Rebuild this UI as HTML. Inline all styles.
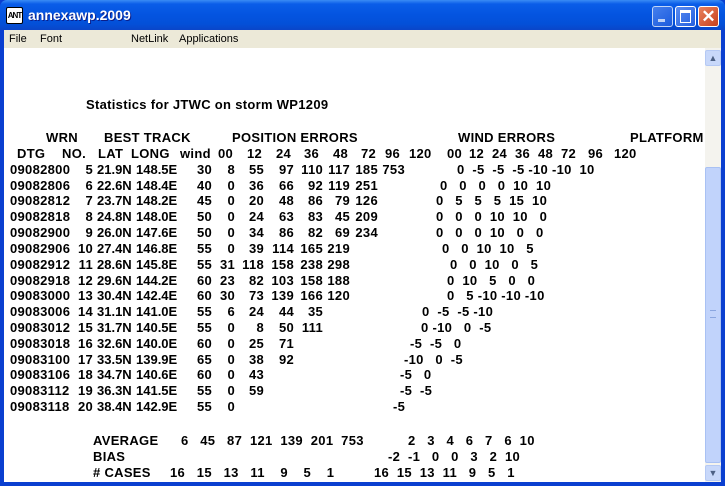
<!DOCTYPE html>
<html><head><meta charset="utf-8"><style>
*{margin:0;padding:0}
body{width:725px;height:486px;overflow:hidden;position:relative;background:#0a3fd0;font-family:"Liberation Sans",sans-serif}
#tb{position:absolute;left:0;top:0;width:725px;height:30px;background:linear-gradient(#3a8cf4 0,#0a5de8 4px,#0454e0 50%,#0350d8 80%,#0a45c8 100%);border-radius:7px 7px 0 0}
#tt{position:absolute;left:28px;top:7px;color:#fff;font-weight:bold;font-size:14px;text-shadow:1px 1px #0a1e8a}
#ic{position:absolute;left:6px;top:7px;width:15px;height:15px;background:#fff;border:1px solid #000;border-radius:2px;font-size:8px;font-weight:bold;line-height:15px;text-align:center;letter-spacing:-1px}
.bt{position:absolute;top:6px;width:19px;height:19px;border:1px solid #fff;border-radius:3px;background:linear-gradient(135deg,#5a8cf0,#2460e0)}
#mb{position:absolute;left:4px;top:30px;width:717px;height:18px;background:#ece9d8;font-size:11px}
#mb span{position:absolute;top:3px}
#ct{position:absolute;left:4px;top:48px;width:701px;height:434px;background:#fff}
#sb{position:absolute;left:705px;top:48px;width:16px;height:434px;background:#f4f3ee}
.ar{position:absolute;left:0;width:16px;height:16px;background:#c8d8fa;border-radius:2px;border:1px solid #b5c9f4;box-sizing:border-box;color:#4d6185;font-size:9px;text-align:center;line-height:14px}
#th{position:absolute;left:0;top:119px;width:16px;height:296px;background:#c1d3fb;border:1px solid #a9c1f3;box-sizing:border-box;border-radius:2px}
.L{position:absolute;left:0;width:725px;height:16px;font-weight:bold;font-size:13px;line-height:16px;letter-spacing:0.3px}
.L i,.L b{position:absolute;font-style:normal;font-weight:bold;white-space:pre;top:0}
.L .c{letter-spacing:0}
</style></head><body>
<div id="tb"><div id="ic">ANT</div><div id="tt">annexawp.2009</div>
<div class="bt" style="left:652px;opacity:.75"><div style="position:absolute;left:5px;top:12px;width:7px;height:3px;background:#fff"></div></div>
<div class="bt" style="left:675px"><div style="position:absolute;left:4px;top:3px;width:9px;height:9px;border:1px solid #fff;border-top-width:3px"></div></div>
<div class="bt" style="left:698px;background:linear-gradient(135deg,#e8825e,#c8401c);color:#fff;font-size:17px;font-weight:bold;text-align:center;line-height:19px">✕</div>
</div>
<div id="mb"><span style="left:5px">File</span><span style="left:36px">Font</span><span style="left:127px">NetLink</span><span style="left:175px">Applications</span></div>
<div id="ct"></div>
<div id="sb"><div class="ar" style="top:2px">&#9650;</div><div id="th"><div style="position:absolute;left:4px;top:142px;width:6px;height:6px;border-top:1px solid #8aa6e0;border-bottom:1px solid #8aa6e0"></div></div><div class="ar" style="top:417px">&#9660;</div></div>

<div class="L" style="top:97px"><i style="left:86px">Statistics for JTWC on storm WP1209</i></div>
<div class="L" style="top:130px"><i style="left:46px">WRN</i><i style="left:104px">BEST TRACK</i><i style="left:232px">POSITION ERRORS</i><i style="left:458px">WIND ERRORS</i><i style="left:630px">PLATFORM</i></div>
<div class="L" style="top:146px"><i style="left:17px">DTG</i><i style="left:62px">NO.</i><i style="left:98px">LAT</i><i style="left:131px">LONG</i><i style="left:180px">wind</i><i style="left:218px">00</i><i style="left:247px">12</i><i style="left:276px">24</i><i style="left:304px">36</i><i style="left:333px">48</i><i style="left:361px">72</i><i style="left:385px">96</i><i style="left:409px">120</i><i style="left:447px">00</i><i style="left:469px">12</i><i style="left:492px">24</i><i style="left:515px">36</i><i style="left:538px">48</i><i style="left:561px">72</i><i style="left:588px">96</i><i style="left:614px">120</i></div>

<div class="L" style="top:162px"><i style="left:10px">09082800</i><b style="right:632px">5</b><i class="c" style="left:97px">21.9N</i><i class="c" style="left:136px">148.5E</i><b style="right:513px">30</b><b style="right:490px">8</b><b style="right:461px">55</b><b style="right:431px">97</b><b style="right:402px">110</b><b style="right:375px">117</b><b style="right:347px">185</b><b style="right:320px">753</b><i style="left:457px">0  -5  -5  -5 -10 -10  10</i></div>
<div class="L" style="top:178px"><i style="left:10px">09082806</i><b style="right:632px">6</b><i class="c" style="left:97px">22.6N</i><i class="c" style="left:136px">148.4E</i><b style="right:513px">40</b><b style="right:490px">0</b><b style="right:461px">36</b><b style="right:431px">66</b><b style="right:402px">92</b><b style="right:375px">119</b><b style="right:347px">251</b><i style="left:440px">0   0   0   0  10  10</i></div>
<div class="L" style="top:193px"><i style="left:10px">09082812</i><b style="right:632px">7</b><i class="c" style="left:97px">23.7N</i><i class="c" style="left:136px">148.2E</i><b style="right:513px">45</b><b style="right:490px">0</b><b style="right:461px">20</b><b style="right:431px">48</b><b style="right:402px">86</b><b style="right:375px">79</b><b style="right:347px">126</b><i style="left:436px">0   5   5   5  15  10</i></div>
<div class="L" style="top:209px"><i style="left:10px">09082818</i><b style="right:632px">8</b><i class="c" style="left:97px">24.8N</i><i class="c" style="left:136px">148.0E</i><b style="right:513px">50</b><b style="right:490px">0</b><b style="right:461px">24</b><b style="right:431px">63</b><b style="right:402px">83</b><b style="right:375px">45</b><b style="right:347px">209</b><i style="left:436px">0   0   0  10  10   0</i></div>
<div class="L" style="top:225px"><i style="left:10px">09082900</i><b style="right:632px">9</b><i class="c" style="left:97px">26.0N</i><i class="c" style="left:136px">147.6E</i><b style="right:513px">50</b><b style="right:490px">0</b><b style="right:461px">34</b><b style="right:431px">86</b><b style="right:402px">82</b><b style="right:375px">69</b><b style="right:347px">234</b><i style="left:436px">0   0   0  10   0   0</i></div>
<div class="L" style="top:241px"><i style="left:10px">09082906</i><b style="right:632px">10</b><i class="c" style="left:97px">27.4N</i><i class="c" style="left:136px">146.8E</i><b style="right:513px">55</b><b style="right:490px">0</b><b style="right:461px">39</b><b style="right:431px">114</b><b style="right:402px">165</b><b style="right:375px">219</b><i style="left:442px">0   0  10  10   5</i></div>
<div class="L" style="top:257px"><i style="left:10px">09082912</i><b style="right:632px">11</b><i class="c" style="left:97px">28.6N</i><i class="c" style="left:136px">145.8E</i><b style="right:513px">55</b><b style="right:490px">31</b><b style="right:461px">118</b><b style="right:431px">158</b><b style="right:402px">238</b><b style="right:375px">298</b><i style="left:450px">0   0  10   0   5</i></div>
<div class="L" style="top:273px"><i style="left:10px">09082918</i><b style="right:632px">12</b><i class="c" style="left:97px">29.6N</i><i class="c" style="left:136px">144.2E</i><b style="right:513px">60</b><b style="right:490px">23</b><b style="right:461px">82</b><b style="right:431px">103</b><b style="right:402px">158</b><b style="right:375px">188</b><i style="left:447px">0  10   5   0   0</i></div>
<div class="L" style="top:288px"><i style="left:10px">09083000</i><b style="right:632px">13</b><i class="c" style="left:97px">30.4N</i><i class="c" style="left:136px">142.4E</i><b style="right:513px">60</b><b style="right:490px">30</b><b style="right:461px">73</b><b style="right:431px">139</b><b style="right:402px">166</b><b style="right:375px">120</b><i style="left:447px">0   5 -10 -10 -10</i></div>
<div class="L" style="top:304px"><i style="left:10px">09083006</i><b style="right:632px">14</b><i class="c" style="left:97px">31.1N</i><i class="c" style="left:136px">141.0E</i><b style="right:513px">55</b><b style="right:490px">6</b><b style="right:461px">24</b><b style="right:431px">44</b><b style="right:402px">35</b><i style="left:422px">0  -5  -5 -10</i></div>
<div class="L" style="top:320px"><i style="left:10px">09083012</i><b style="right:632px">15</b><i class="c" style="left:97px">31.7N</i><i class="c" style="left:136px">140.5E</i><b style="right:513px">55</b><b style="right:490px">0</b><b style="right:461px">8</b><b style="right:431px">50</b><b style="right:402px">111</b><i style="left:421px">0 -10   0  -5</i></div>
<div class="L" style="top:336px"><i style="left:10px">09083018</i><b style="right:632px">16</b><i class="c" style="left:97px">32.6N</i><i class="c" style="left:136px">140.0E</i><b style="right:513px">60</b><b style="right:490px">0</b><b style="right:461px">25</b><b style="right:431px">71</b><i style="left:410px">-5  -5   0</i></div>
<div class="L" style="top:352px"><i style="left:10px">09083100</i><b style="right:632px">17</b><i class="c" style="left:97px">33.5N</i><i class="c" style="left:136px">139.9E</i><b style="right:513px">65</b><b style="right:490px">0</b><b style="right:461px">38</b><b style="right:431px">92</b><i style="left:404px">-10   0  -5</i></div>
<div class="L" style="top:367px"><i style="left:10px">09083106</i><b style="right:632px">18</b><i class="c" style="left:97px">34.7N</i><i class="c" style="left:136px">140.6E</i><b style="right:513px">60</b><b style="right:490px">0</b><b style="right:461px">43</b><i style="left:400px">-5   0</i></div>
<div class="L" style="top:383px"><i style="left:10px">09083112</i><b style="right:632px">19</b><i class="c" style="left:97px">36.3N</i><i class="c" style="left:136px">141.5E</i><b style="right:513px">55</b><b style="right:490px">0</b><b style="right:461px">59</b><i style="left:400px">-5  -5</i></div>
<div class="L" style="top:399px"><i style="left:10px">09083118</i><b style="right:632px">20</b><i class="c" style="left:97px">38.4N</i><i class="c" style="left:136px">142.9E</i><b style="right:513px">55</b><b style="right:490px">0</b><i style="left:393px">-5</i></div>

<div class="L" style="top:433px"><i style="left:93px">AVERAGE</i><i style="left:181px">6   45   87  121  139  201  753</i><i style="left:408px">2   3   4   6   7   6  10</i></div>
<div class="L" style="top:449px"><i style="left:93px">BIAS</i><i style="left:388px">-2  -1   0   0   3   2  10</i></div>
<div class="L" style="top:465px"><i style="left:93px"># CASES</i><i style="left:170px">16   15   13   11    9    5    1</i><i style="left:374px">16  15  13  11   9   5   1</i></div>
</body></html>
